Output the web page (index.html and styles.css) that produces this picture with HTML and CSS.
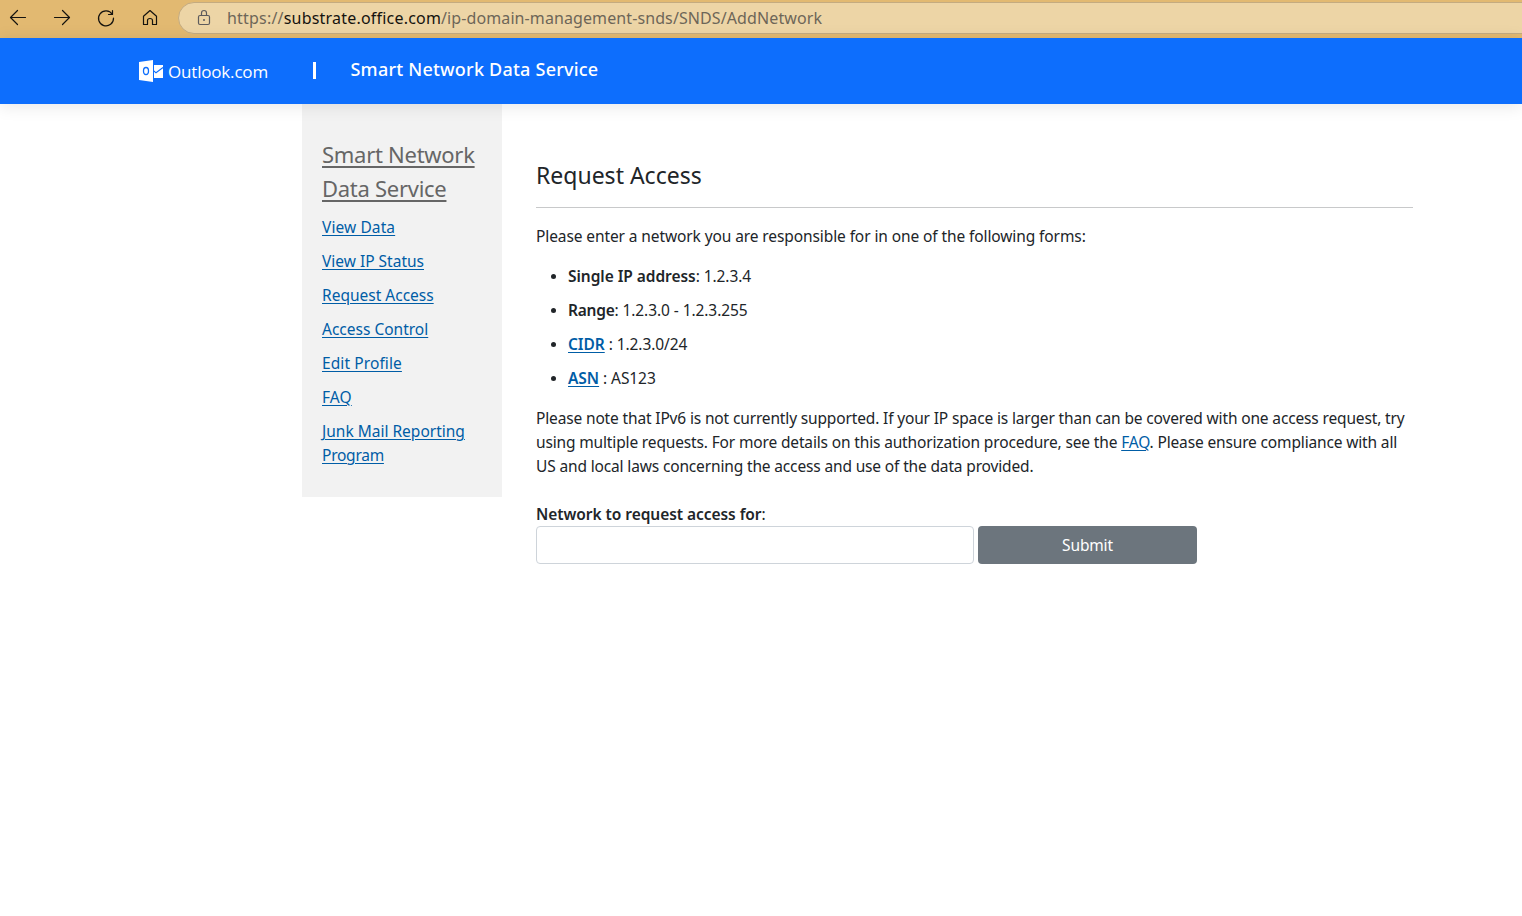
FILE: index.html
```html
<!DOCTYPE html>
<html lang="en">
<head>
<meta charset="utf-8">
<title>Smart Network Data Service</title>
<link rel="stylesheet" href="styles.css">
</head>
<body>
<div class="toolbar">
  <svg class="nav-icons" width="179" height="38" viewBox="0 0 179 38" fill="none" stroke="#15130f" stroke-width="1.2" stroke-linecap="round" stroke-linejoin="round">
    <path d="M25.500 17.500H10.500M17.500 10.500L10.500 17.500L17.500 24.500"/>
    <path d="M54.500 17.500H69.500M62.500 10.500L69.500 17.500L62.500 24.500"/>
    <path d="M108.500 14.500H112.500V10.500M112.300 14.300A7.500 7.500 0 1 0 113.500 18"/>
    <path d="M143.500 16.200L150 10.500L156.500 16.200V24.500H152.500V20.500Q152.500 18.500 150 18.500T147.500 20.500V24.500H143.500Z"/>
  </svg>
  <div class="address">
    <svg class="lock" width="14" height="18" viewBox="0 0 14 18" fill="none" stroke="#5d5b5c" stroke-width="1.2">
      <rect x="1.500" y="6.500" width="11" height="9" rx="1.500"/>
      <path d="M4.500 6.500V4Q4.500 1.500 7 1.500T9.500 4V6.500"/>
      <circle cx="7" cy="11" r="1" fill="#5d5b5c" stroke="none"/>
    </svg>
    <span class="url"><span class="scheme">https://</span><span class="host">substrate.office.com</span><span class="path">/ip-domain-management-snds/SNDS/AddNetwork</span></span>
  </div>
</div>
<header class="header">
  <svg class="logo" width="24" height="22" viewBox="0 0 24 22">
    <path fill="#fff" d="M0 2L14 0V22L0 20ZM15 5H24V18H15Z"/>
    <ellipse cx="7" cy="11" rx="2.500" ry="3.500" fill="none" stroke="#0d6efd" stroke-width="1.300"/>
    <path d="M15 11L17 12.800L24 7.500" fill="none" stroke="#0d6efd" stroke-width="1.100"/>
  </svg>
  <span class="brand">Outlook.com</span>
  <span class="divider"></span>
  <span class="service">Smart Network Data Service</span>
</header>
<div class="page">
  <nav class="sidebar">
    <a class="side-title" href="#">Smart Network<br>Data Service</a>
    <a class="wide" href="#">View Data</a>
    <a href="#">View IP Status</a>
    <a href="#">Request Access</a>
    <a href="#">Access Control</a>
    <a class="wide" href="#">Edit Profile</a>
    <a class="wide" href="#">FAQ</a>
    <a href="#">Junk Mail Reporting<br><span class="tight">Program</span></a>
  </nav>
  <main class="main">
    <h1>Request Access</h1>
    <p class="intro">Please enter a network you are responsible for in one of the following forms:</p>
    <ul>
      <li><b>Single IP address</b>: 1.2.3.4</li>
      <li><b class="tight">Range</b>: 1.2.3.0 - 1.2.3.255</li>
      <li><a href="#"><b>CIDR</b></a> : 1.2.3.0/24</li>
      <li><a href="#"><b>ASN</b></a> : AS123</li>
    </ul>
    <p class="note">Please note that IPv6 is not currently supported. If your IP space is larger than can be covered with one access request, try<br>using multiple requests. For more details on this authorization procedure, see the <a href="#">FAQ</a>. Please ensure compliance with all<br>US and local laws concerning the access and use of the data provided.</p>
    <label for="network"><b>Network to request access for</b>:</label>
    <div class="form-row">
      <input id="network" type="text">
      <button type="button">Submit</button>
    </div>
  </main>
</div>
</body>
</html>
```
FILE: styles.css
```css
* { box-sizing: border-box; }
body {
  margin: 0;
  height: 916px;
  overflow: hidden;
  background: #fff;
  color: #212529;
  font: 400 15.5px/24px "Noto Sans", sans-serif;
  letter-spacing: -0.15px;
}
a { color: #005da6; text-decoration: underline; text-decoration-thickness: 1px; text-underline-offset: 2px; }
b { font-weight: 600; letter-spacing: -0.05px; }
.toolbar { display: flex; height: 38px; background: #e2b971; overflow: hidden; }
.nav-icons { flex: none; }
.address {
  flex: 1;
  display: flex;
  align-items: center;
  height: 32px;
  margin: 2px -20px 0 -1px;
  padding-left: 18px;
  background: #edd5a6;
  border: 1px solid #c4ab80;
  border-radius: 16px;
}
.lock { margin-right: 16px; }
.url { color: #6d6658; font-size: 16px; white-space: nowrap; letter-spacing: 0.2px; }
.host { color: #15130f; }
.path { letter-spacing: 0.1px; }
.header {
  position: relative;
  display: flex;
  height: 66px;
  padding: 22px 0 0 139px;
  background: #0d6efd;
  color: #fff;
  box-shadow: 0 2px 16px rgba(0, 0, 0, .1);
  white-space: nowrap;
}
.logo { flex: none; }
.brand { width: 145px; padding-left: 5px; font: 17px/24px "Open Sans", sans-serif; letter-spacing: -0.18px; }
.divider { width: 3px; height: 17px; margin: 2px 34.5px 0 5px; background: #fff; }
.service { font-size: 18px; font-weight: 500; line-height: 18px; letter-spacing: 0.22px; }
.page { display: flex; padding-left: 302px; }
.sidebar { display: flex; flex-direction: column; align-items: flex-start; gap: 10px; width: 200px; height: 393px; padding: 33px 0 0 20px; background: #f2f2f2; letter-spacing: 0; white-space: nowrap; }
.sidebar .side-title { color: #666; font-size: 22px; line-height: 34px; letter-spacing: -0.28px; text-decoration-thickness: 2px; text-underline-offset: 3px; }
.sidebar .wide { letter-spacing: 0.1px; }
.tight { letter-spacing: -0.25px; }
.main { width: 877px; margin-left: 34px; padding-top: 54px; white-space: nowrap; }
h1 { height: 50px; margin: 0 0 16px; border-bottom: 1px solid #c8c9ca; font-size: 23px; font-weight: 400; line-height: 34px; letter-spacing: 0; }
p { margin: 0 0 16px; }
.intro { letter-spacing: -0.1px; }
ul { display: flex; flex-direction: column; gap: 10px; margin: 0 0 16px; padding-left: 32px; letter-spacing: -0.08px; }
li::marker { font-size: 14px; }
.note { margin-bottom: 24px; }
label { display: block; }
.form-row { display: flex; gap: 4px; }
input { width: 438px; height: 38px; border: 1px solid #ced4da; border-radius: 4px; background: #fff; }
button { width: 219px; height: 38px; padding: 0; border: 0; border-radius: 4px; background: #6c757d; color: #fff; font: inherit; letter-spacing: inherit; }
```
